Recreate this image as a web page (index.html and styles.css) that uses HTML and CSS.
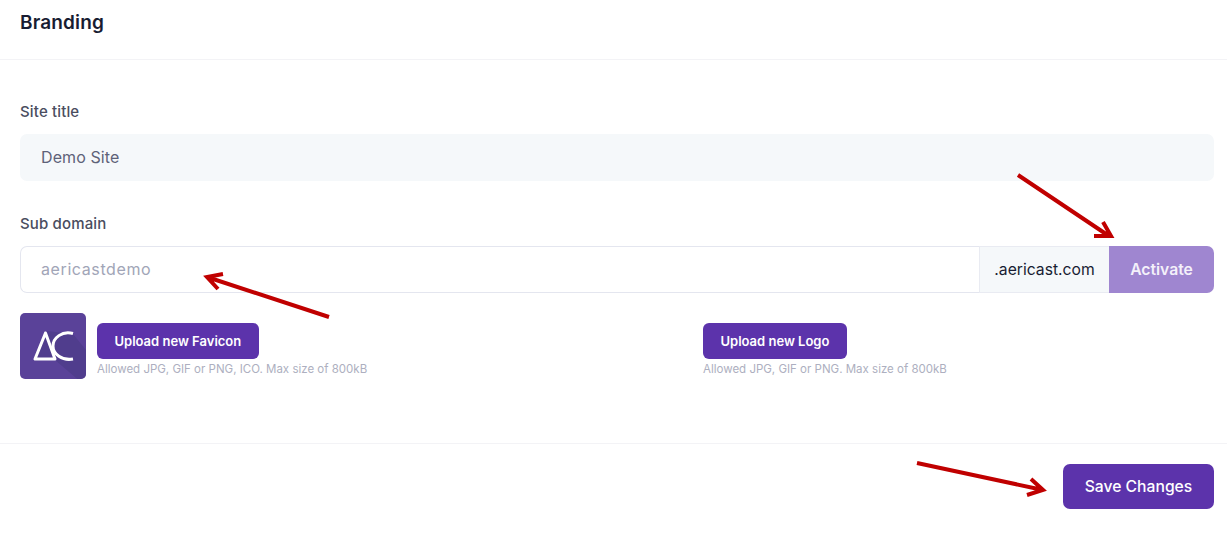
FILE: index.html
```html
<!DOCTYPE html>
<html lang="en">
<head>
<meta charset="utf-8">
<title>Branding</title>
<link rel="stylesheet" href="styles.css">
</head>
<body>
<div class="page">
  <header class="head"><h1 class="title">Branding</h1></header>
  <main class="body">
    <div class="field">
      <div class="label">Site title</div>
      <div class="input input-filled">Demo Site</div>
    </div>
    <div class="field field-sub">
      <div class="label">Sub domain</div>
      <div class="group">
        <div class="group-input">aericastdemo</div>
        <div class="group-suffix">.aericast.com</div>
        <div class="group-btn">Activate</div>
      </div>
    </div>
    <div class="uploads">
      <div class="upload">
        <svg class="favicon" width="66" height="66" viewBox="0 0 66 66" aria-hidden="true">
          <rect width="66" height="66" fill="#5a4299"/>
          <path d="M27 18 L14 47 L35 47 L62 70 L70 70 L70 42 L53 21 Z" fill="#4c3a87" opacity=".65"/>
          <path d="M25.500 20 L15 46 H35 Z" fill="none" stroke="#fff" stroke-width="3" stroke-linejoin="round"/>
          <path d="M53 20.500 C42 17.500 33 25 33 33 C33 41 42 48 53 46" fill="none" stroke="#fff" stroke-width="3"/>
        </svg>
        <div class="upload-main">
          <div class="btn">Upload new Favicon</div>
          <div class="hint">Allowed JPG, GIF or PNG, ICO. Max size of 800kB</div>
        </div>
      </div>
      <div class="upload">
        <div class="upload-main">
          <div class="btn">Upload new Logo</div>
          <div class="hint">Allowed JPG, GIF or PNG. Max size of 800kB</div>
        </div>
      </div>
    </div>
  </main>
  <footer class="foot"><div class="save">Save Changes</div></footer>
  <svg class="arrows" width="1227" height="533" viewBox="0 0 1227 533" aria-hidden="true">
    <path d="M1018 175 L1109 236 M1103 222 L1111 236 L1094 236"/>
    <path d="M329 317 L207 277 M223 274 L207 277 L218 289"/>
    <path d="M917 463 L1043 490 M1031 479 L1043 490 L1027 495"/>
  </svg>
</div>
</body>
</html>
```
FILE: styles.css
```css
* { box-sizing: border-box; }
html, body { margin: 0; padding: 0; background: #fff; }
body { font-family: "Inter", "Open Sans", sans-serif; overflow: hidden; }
.page { position: relative; width: 1227px; height: 533px; }
.head { height: 60px; border-bottom: 1px solid #f3f3f6; padding: 12px 13px 0 20px; }
.title { margin: 0; font-size: 19px; line-height: 22px; font-weight: 600; letter-spacing: .15px; color: #181c32; }
.body { height: 384px; border-bottom: 1px solid #f3f3f6; padding: 42px 13px 0 20px; }
.label { font-size: 15px; line-height: 20px; font-weight: 500; letter-spacing: .15px; color: #4a4d60; }
.input { height: 47px; margin-top: 12px; border-radius: 7px; padding: 0 21px 1px; display: flex; align-items: center; font-size: 16px; letter-spacing: .1px; font-weight: 400; }
.input-filled { background: #f5f8fa; color: #5e6278; }
.field-sub { margin-top: 33px; }
.group { display: flex; height: 47px; margin-top: 12px; }
.group-input { flex: 1; display: flex; align-items: center; padding: 0 0 1px 20px; border: 1px solid #e4e6ef; border-right: 0; border-radius: 7px 0 0 7px; color: #a1a5b7; font-size: 16px; letter-spacing: .6px; font-weight: 400; }
.group-suffix { width: 130px; display: flex; align-items: center; justify-content: center; padding-bottom: 1px; background: #f5f8fa; border: 1px solid #e9ebf2; border-width: 1px 0 1px 1px; color: #181c32; font-size: 15.700px; font-weight: 400; }
.group-btn { width: 105px; display: flex; align-items: center; justify-content: center; padding-bottom: 1px; background: #9f86d0; color: #f4f1fa; font-size: 15.700px; font-weight: 600; border-radius: 0 7px 7px 0; }
.uploads { display: grid; grid-template-columns: 683px 1fr; margin-top: 20px; }
.upload { display: flex; gap: 11px; }
.favicon { display: block; flex: none; border-radius: 5px; }
.upload-main { padding-top: 10px; }
.btn { display: inline-block; height: 36px; line-height: 36px; padding: 0 17.500px; background: #5c33ab; color: #fff; border-radius: 6px; font-size: 13px; font-weight: 600; }
.hint { margin-top: 1px; font-size: 11.500px; line-height: 18px; color: #adafc0; }
.foot { display: flex; justify-content: flex-end; padding: 20px 13px 0 20px; }
.save { width: 151px; height: 45px; display: flex; align-items: center; justify-content: center; background: #5c33ab; color: #fff; border-radius: 7px; font-size: 15.700px; font-weight: 500; }
.arrows { position: absolute; left: 0; top: 0; pointer-events: none; }
.arrows path { fill: none; stroke: #c00000; stroke-width: 4; }
```
